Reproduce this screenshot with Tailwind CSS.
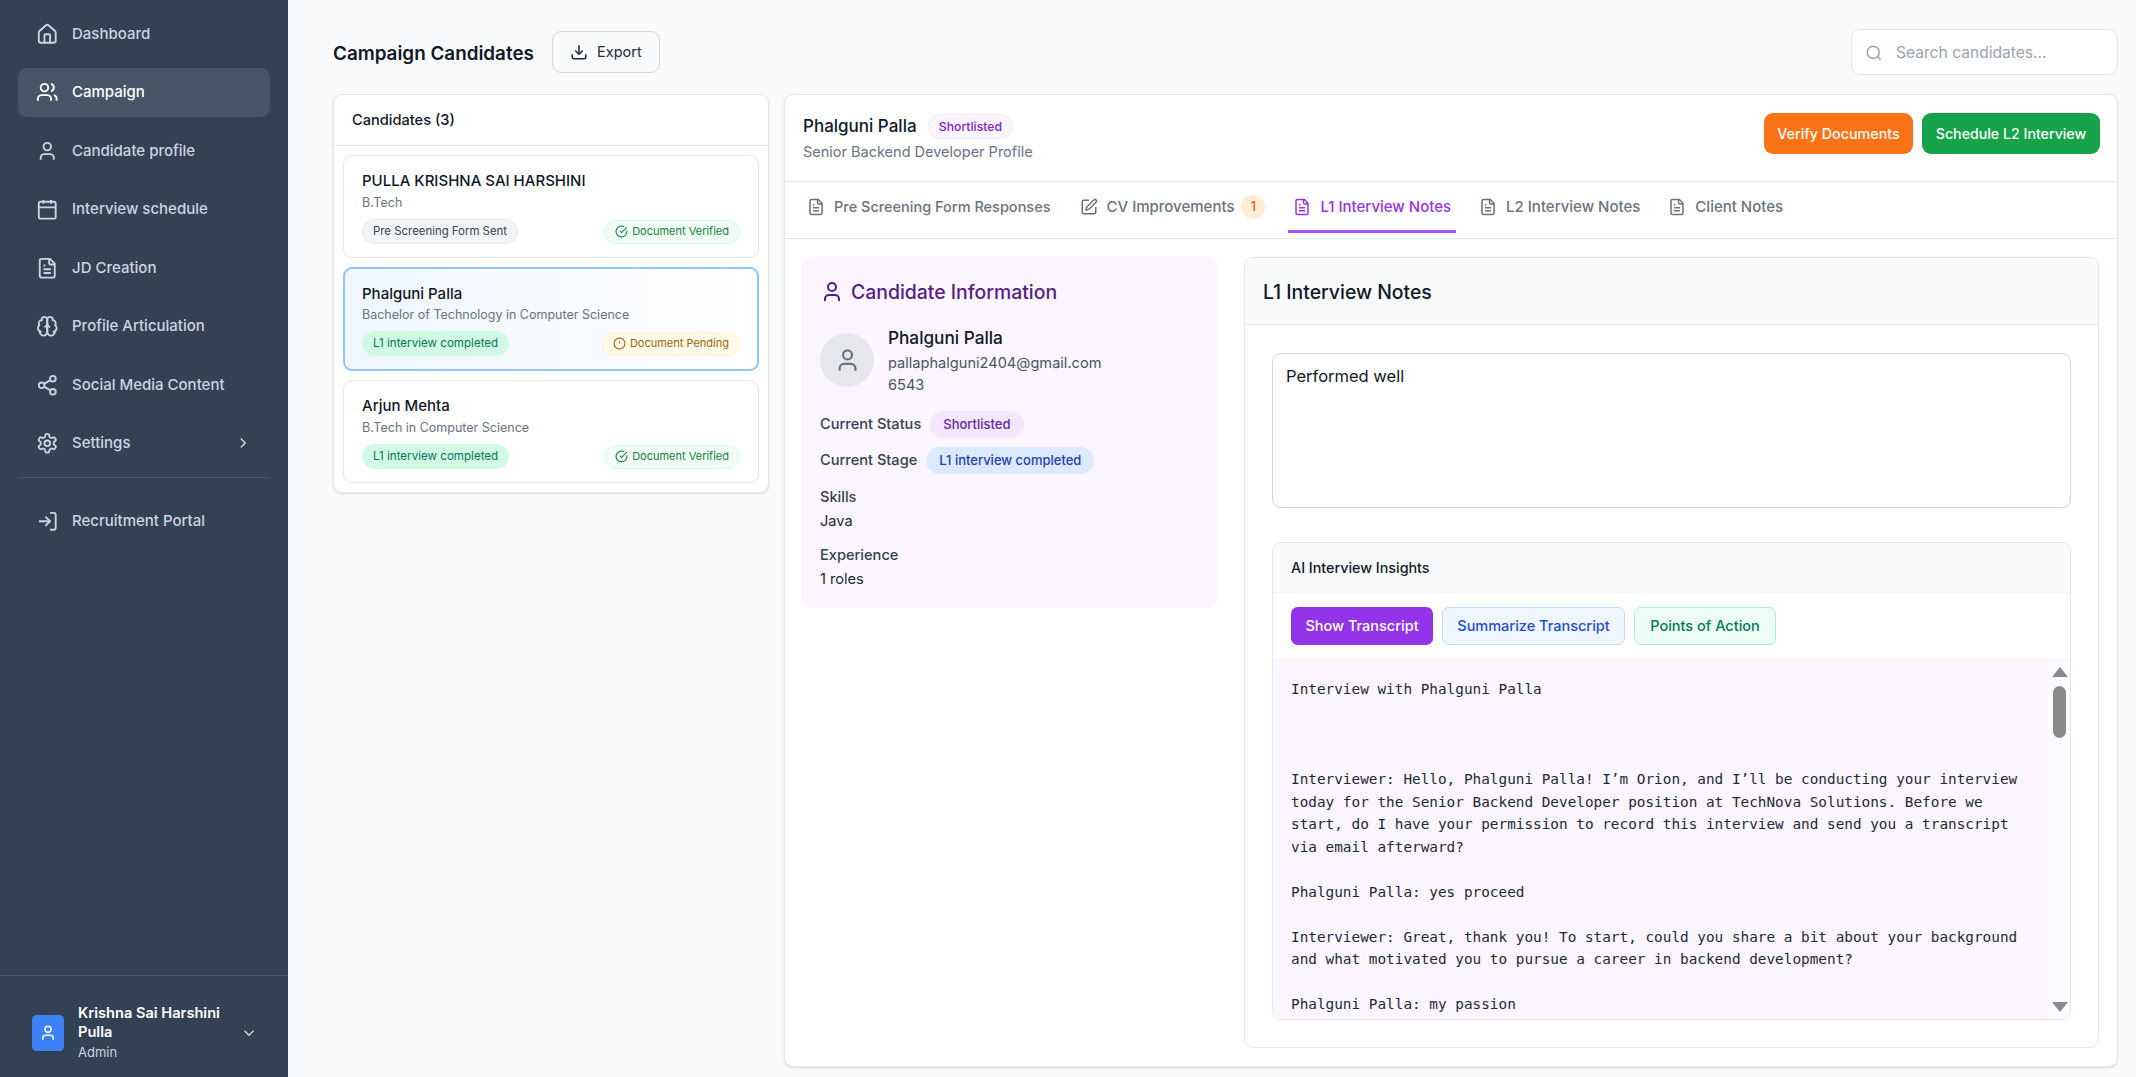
<!doctype html>
<html lang="en" class="text-[18px]">

<head>
    <title>Campaign Candidates</title>
    <meta charset="utf-8">
    <meta name="viewport" content="width=device-width, initial-scale=1">
    <script src="https://cdn.jsdelivr.net/npm/@tailwindcss/browser@4"></script>
</head>

<body class="h-screen overflow-hidden flex bg-[#f9fafb] text-[#111827] font-['Inter',sans-serif]">

<!-- icon sprite -->
<svg class="hidden" xmlns="http://www.w3.org/2000/svg">
    <symbol id="i-house" viewBox="0 0 24 24"><path d="M15 21v-8a1 1 0 0 0-1-1h-4a1 1 0 0 0-1 1v8"/><path d="M3 10a2 2 0 0 1 .709-1.528l7-5.999a2 2 0 0 1 2.582 0l7 5.999A2 2 0 0 1 21 10v9a2 2 0 0 1-2 2H5a2 2 0 0 1-2-2z"/></symbol>
    <symbol id="i-users" viewBox="0 0 24 24"><path d="M16 21v-2a4 4 0 0 0-4-4H6a4 4 0 0 0-4 4v2"/><circle cx="9" cy="7" r="4"/><path d="M22 21v-2a4 4 0 0 0-3-3.87"/><path d="M16 3.13a4 4 0 0 1 0 7.75"/></symbol>
    <symbol id="i-user" viewBox="0 0 24 24"><path d="M19 21v-2a4 4 0 0 0-4-4H9a4 4 0 0 0-4 4v2"/><circle cx="12" cy="7" r="4"/></symbol>
    <symbol id="i-calendar" viewBox="0 0 24 24"><path d="M8 2v4"/><path d="M16 2v4"/><rect width="18" height="18" x="3" y="4" rx="2"/><path d="M3 10h18"/></symbol>
    <symbol id="i-file" viewBox="0 0 24 24"><path d="M15 2H6a2 2 0 0 0-2 2v16a2 2 0 0 0 2 2h12a2 2 0 0 0 2-2V7Z"/><path d="M14 2v4a2 2 0 0 0 2 2h4"/><path d="M10 9H8"/><path d="M16 13H8"/><path d="M16 17H8"/></symbol>
    <symbol id="i-brain" viewBox="0 0 24 24"><path d="M12 5a3 3 0 1 0-5.997.125 4 4 0 0 0-2.526 5.77 4 4 0 0 0 .556 6.588A4 4 0 1 0 12 18Z"/><path d="M12 5a3 3 0 1 1 5.997.125 4 4 0 0 1 2.526 5.77 4 4 0 0 1-.556 6.588A4 4 0 1 1 12 18Z"/><path d="M15 13a4.5 4.5 0 0 1-3-4 4.5 4.5 0 0 1-3 4"/><path d="M17.599 6.5a3 3 0 0 0 .399-1.375"/><path d="M6.003 5.125A3 3 0 0 0 6.401 6.5"/><path d="M3.477 10.896a4 4 0 0 1 .585-.396"/><path d="M19.938 10.5a4 4 0 0 1 .585.396"/><path d="M6 18a4 4 0 0 1-1.967-.516"/><path d="M19.967 17.484A4 4 0 0 1 18 18"/></symbol>
    <symbol id="i-share" viewBox="0 0 24 24"><circle cx="18" cy="5" r="3"/><circle cx="6" cy="12" r="3"/><circle cx="18" cy="19" r="3"/><line x1="8.59" x2="15.42" y1="13.51" y2="17.49"/><line x1="15.41" x2="8.59" y1="6.51" y2="10.49"/></symbol>
    <symbol id="i-settings" viewBox="0 0 24 24"><path d="M12.22 2h-.44a2 2 0 0 0-2 2v.18a2 2 0 0 1-1 1.73l-.43.25a2 2 0 0 1-2 0l-.15-.08a2 2 0 0 0-2.73.73l-.22.38a2 2 0 0 0 .73 2.73l.15.1a2 2 0 0 1 1 1.72v.51a2 2 0 0 1-1 1.74l-.15.09a2 2 0 0 0-.73 2.73l.22.38a2 2 0 0 0 2.73.73l.15-.08a2 2 0 0 1 2 0l.43.25a2 2 0 0 1 1 1.73V20a2 2 0 0 0 2 2h.44a2 2 0 0 0 2-2v-.18a2 2 0 0 1 1-1.73l.43-.25a2 2 0 0 1 2 0l.15.08a2 2 0 0 0 2.73-.73l.22-.39a2 2 0 0 0-.73-2.73l-.15-.08a2 2 0 0 1-1-1.74v-.5a2 2 0 0 1 1-1.74l.15-.09a2 2 0 0 0 .73-2.73l-.22-.38a2 2 0 0 0-2.73-.73l-.15.08a2 2 0 0 1-2 0l-.43-.25a2 2 0 0 1-1-1.73V4a2 2 0 0 0-2-2z"/><circle cx="12" cy="12" r="3"/></symbol>
    <symbol id="i-login" viewBox="0 0 24 24"><path d="M15 3h4a2 2 0 0 1 2 2v14a2 2 0 0 1-2 2h-4"/><polyline points="10 17 15 12 10 7"/><line x1="15" x2="3" y1="12" y2="12"/></symbol>
    <symbol id="i-right" viewBox="0 0 24 24"><path d="m9 18 6-6-6-6"/></symbol>
    <symbol id="i-down" viewBox="0 0 24 24"><path d="m6 9 6 6 6-6"/></symbol>
    <symbol id="i-download" viewBox="0 0 24 24"><path d="M21 15v4a2 2 0 0 1-2 2H5a2 2 0 0 1-2-2v-4"/><polyline points="7 10 12 15 17 10"/><line x1="12" x2="12" y1="15" y2="3"/></symbol>
    <symbol id="i-search" viewBox="0 0 24 24"><circle cx="11" cy="11" r="8"/><path d="m21 21-4.3-4.3"/></symbol>
    <symbol id="i-check" viewBox="0 0 24 24"><path d="M21.801 10A10 10 0 1 1 17 3.335"/><path d="m9 11 3 3L22 4"/></symbol>
    <symbol id="i-alert" viewBox="0 0 24 24"><circle cx="12" cy="12" r="10"/><line x1="12" x2="12" y1="8" y2="12"/><line x1="12" x2="12.01" y1="16" y2="16"/></symbol>
    <symbol id="i-pen" viewBox="0 0 24 24"><path d="M12 3H5a2 2 0 0 0-2 2v14a2 2 0 0 0 2 2h14a2 2 0 0 0 2-2v-7"/><path d="M18.375 2.625a1 1 0 0 1 3 3l-9.013 9.014a2 2 0 0 1-.853.505l-2.873.84a.5.5 0 0 1-.62-.62l.84-2.873a2 2 0 0 1 .506-.852z"/></symbol>
</svg>

<!-- sidebar -->
<aside class="w-64 shrink-0 h-full bg-[#334155] flex flex-col justify-between">
    <nav class="px-4 pt-2 text-[15px] font-medium text-[#cbd5e1]">
        <div class="space-y-2">
            <a class="flex items-center gap-3 px-4 py-3 rounded-lg"><svg class="w-5 h-5 fill-none stroke-current stroke-2"><use href="#i-house"/></svg>Dashboard</a>
            <a class="flex items-center gap-3 px-4 py-3 rounded-lg bg-[#475569] text-white"><svg class="w-5 h-5 fill-none stroke-current stroke-2"><use href="#i-users"/></svg>Campaign</a>
            <a class="flex items-center gap-3 px-4 py-3 rounded-lg"><svg class="w-5 h-5 fill-none stroke-current stroke-2"><use href="#i-user"/></svg>Candidate profile</a>
            <a class="flex items-center gap-3 px-4 py-3 rounded-lg"><svg class="w-5 h-5 fill-none stroke-current stroke-2"><use href="#i-calendar"/></svg>Interview schedule</a>
            <a class="flex items-center gap-3 px-4 py-3 rounded-lg"><svg class="w-5 h-5 fill-none stroke-current stroke-2"><use href="#i-file"/></svg>JD Creation</a>
            <a class="flex items-center gap-3 px-4 py-3 rounded-lg"><svg class="w-5 h-5 fill-none stroke-current stroke-2"><use href="#i-brain"/></svg>Profile Articulation</a>
            <a class="flex items-center gap-3 px-4 py-3 rounded-lg"><svg class="w-5 h-5 fill-none stroke-current stroke-2"><use href="#i-share"/></svg>Social Media Content</a>
            <a class="flex items-center gap-3 px-4 py-3 rounded-lg"><svg class="w-5 h-5 fill-none stroke-current stroke-2"><use href="#i-settings"/></svg><span class="flex-1">Settings</span><svg class="w-4 h-4 fill-none stroke-current stroke-2"><use href="#i-right"/></svg></a>
        </div>
        <div class="mt-2 pt-4 border-t border-[#475569]">
            <a class="flex items-center gap-3 px-4 py-3 rounded-lg"><svg class="w-5 h-5 fill-none stroke-current stroke-2"><use href="#i-login"/></svg>Recruitment Portal</a>
        </div>
    </nav>

    <div class="border-t border-[#475569] pl-[32px] pr-[30px] pt-[28px] pb-[15px] flex items-center">
        <div class="w-[32px] h-[36px] shrink-0 rounded bg-[#3b82f6] flex items-center justify-center text-white">
            <svg class="w-[18px] h-[18px] fill-none stroke-current stroke-2"><use href="#i-user"/></svg>
        </div>
        <div class="ml-[14px] flex-1 min-w-0">
            <p class="text-[14.6px] leading-[19px] font-semibold text-white">Krishna Sai Harshini Pulla</p>
            <p class="text-[13px] leading-[20px] text-[#cbd5e1]">Admin</p>
        </div>
        <svg class="w-4 h-4 ml-2 shrink-0 fill-none stroke-[#cbd5e1] stroke-2"><use href="#i-down"/></svg>
    </div>
</aside>

<!-- main -->
<main class="flex-1 min-w-0 h-full flex flex-col pl-10 pr-4 pt-[29px] pb-[10px]">
    <div class="flex items-center justify-between h-[46px] mb-[19px]">
        <div class="flex items-center gap-[18px]">
            <h1 class="mt-[5px] text-[18.85px] font-semibold">Campaign Candidates</h1>
            <button class="h-[42px] w-[108px] flex items-center justify-center gap-[9px] rounded-lg border border-gray-300 bg-[#f9fafb] text-[14.5px] text-[#1f2937]">
                <svg class="w-[18px] h-[18px] fill-none stroke-current stroke-2"><use href="#i-download"/></svg>Export
            </button>
        </div>
        <div class="w-[267px] h-[46px] pt-[1px] flex items-center gap-[13px] pl-[13px] rounded-lg border border-gray-200 bg-white text-[15.6px] text-[#9ca3af]">
            <svg class="w-[18px] h-[18px] fill-none stroke-current stroke-2"><use href="#i-search"/></svg>Search candidates...
        </div>
    </div>

    <div class="flex-1 min-h-0 flex gap-[15px] items-start">
        <!-- candidate list -->
        <section class="w-[436px] shrink-0 rounded-lg border border-gray-200 bg-white shadow-sm">
            <h2 class="h-[51px] pt-[1px] flex items-center px-4 border-b border-gray-200 text-[14.6px] font-medium">Candidates (3)</h2>
            <div class="p-[9px] flex flex-col gap-[9px]">
                <div class="h-[103px] rounded-lg border border-gray-200 bg-white px-4 pt-[14px]">
                    <p class="text-[15px] font-medium leading-[22px]">PULLA KRISHNA SAI HARSHINI</p>
                    <p class="text-[12.5px] leading-[20px] mt-[1px] text-[#6b7280]">B.Tech</p>
                    <div class="mt-[6px] flex items-center justify-between">
                        <span class="h-[25px] px-[10px] flex items-center rounded-full border border-gray-200 bg-gray-100 text-[11.4px] text-[#374151]">Pre Screening Form Sent</span>
                        <span class="h-[24px] px-[10px] flex items-center gap-[4px] rounded-full border border-[#dcfce7] bg-[#f0fdf4] text-[11px] text-[#15803d]"><svg class="w-[13px] h-[13px] fill-none stroke-current stroke-2"><use href="#i-check"/></svg>Document Verified</span>
                    </div>
                </div>
                <div class="h-[104px] rounded-lg border-2 border-[#93c5fd] bg-linear-to-r from-[#eff6ff] to-white px-[17px] pt-[14px]">
                    <p class="text-[15px] font-medium leading-[22px]">Phalguni Palla</p>
                    <p class="text-[12.5px] leading-[20px] text-[#6b7280]">Bachelor of Technology in Computer Science</p>
                    <div class="mt-[6px] flex items-center justify-between">
                        <span class="h-[25px] px-[10px] flex items-center rounded-full border border-[#d1fae5] bg-[#d1fae5] text-[11.6px] text-[#047857]">L1 interview completed</span>
                        <span class="h-[24px] px-[10px] flex items-center gap-[4px] rounded-full border border-[#fef9c3] bg-[#fefce8] text-[11px] text-[#a16207]"><svg class="w-[13px] h-[13px] fill-none stroke-current stroke-2"><use href="#i-alert"/></svg>Document Pending</span>
                    </div>
                </div>
                <div class="h-[103px] rounded-lg border border-gray-200 bg-white px-4 pt-[14px]">
                    <p class="text-[15px] font-medium leading-[22px]">Arjun Mehta</p>
                    <p class="text-[12.5px] leading-[20px] mt-[1px] text-[#6b7280]">B.Tech in Computer Science</p>
                    <div class="mt-[6px] flex items-center justify-between">
                        <span class="h-[25px] px-[10px] flex items-center rounded-full border border-[#d1fae5] bg-[#d1fae5] text-[11.6px] text-[#047857]">L1 interview completed</span>
                        <span class="h-[24px] px-[10px] flex items-center gap-[4px] rounded-full border border-[#dcfce7] bg-[#f0fdf4] text-[11px] text-[#15803d]"><svg class="w-[13px] h-[13px] fill-none stroke-current stroke-2"><use href="#i-check"/></svg>Document Verified</span>
                    </div>
                </div>
            </div>
        </section>

        <!-- candidate detail -->
        <section class="flex-1 min-w-0 h-full flex flex-col rounded-lg border border-gray-200 bg-white shadow-sm">
            <header class="h-[87px] shrink-0 flex items-start justify-between pl-4 pr-[17px] pt-[18px] border-b border-gray-200">
                <div class="mt-[1px]">
                    <div class="flex items-center gap-2.5">
                        <h2 class="text-[17px] font-medium">Phalguni Palla</h2>
                        <span class="h-[25px] px-[10px] flex items-center rounded-full border border-[#f3e8ff] bg-[#faf5ff] text-[12.2px] font-medium text-[#7e22ce]">Shortlisted</span>
                    </div>
                    <p class="text-[14.5px] mt-[1px] text-[#6b7280]">Senior Backend Developer Profile</p>
                </div>
                <div class="flex gap-[9px]">
                    <button class="h-[41px] w-[149px] rounded-lg bg-[#f97316] text-[14.3px] font-medium text-white">Verify Documents</button>
                    <button class="h-[41px] w-[178px] rounded-lg bg-[#16a34a] text-[14.2px] font-medium text-white">Schedule L2 Interview</button>
                </div>
            </header>

            <nav class="h-[57px] shrink-0 flex px-[17px] gap-[5px] border-b border-gray-200 text-[15px] font-medium text-[#6b7280]">
                <a class="flex items-center gap-[9px] px-[5px] h-[50px] text-[14.5px]"><svg class="w-[18px] h-[18px] fill-none stroke-current stroke-2"><use href="#i-file"/></svg>Pre Screening Form Responses</a>
                <a class="flex items-center gap-[9px] px-[5px] ml-[14px] h-[50px]"><svg class="w-[18px] h-[18px] fill-none stroke-current stroke-2"><use href="#i-pen"/></svg>CV Improvements<span class="-ml-[2px] w-[24px] h-[24px] flex items-center justify-center rounded-full bg-[#ffedd5] text-[12.5px] text-[#ea580c]">1</span></a>
                <a class="flex items-center gap-[9px] px-[5px] pt-[2px] ml-[13px] h-[51px] border-b-[3px] border-[#a855f7] text-[#9333ea]"><svg class="w-[18px] h-[18px] fill-none stroke-current stroke-2"><use href="#i-file"/></svg>L1 Interview Notes</a>
                <a class="flex items-center gap-[9px] px-[5px] ml-[13px] h-[50px]"><svg class="w-[18px] h-[18px] fill-none stroke-current stroke-2"><use href="#i-file"/></svg>L2 Interview Notes</a>
                <a class="flex items-center gap-[9px] px-[5px] ml-[13px] h-[50px]"><svg class="w-[18px] h-[18px] fill-none stroke-current stroke-2"><use href="#i-file"/></svg>Client Notes</a>
            </nav>

            <div class="flex-1 min-h-0 flex items-start gap-[27px] pl-[17px] pr-[18px] py-[18px]">
                <!-- candidate information -->
                <div class="w-[415px] shrink-0 rounded-lg bg-[#faf5ff] p-[18px] h-[351px]">
                    <h3 class="flex items-center gap-[7px] text-[19.4px] font-medium text-[#581c87] leading-[34px]"><svg class="w-[24px] h-[24px] fill-none stroke-current stroke-2"><use href="#i-user"/></svg>Candidate Information</h3>
                    <div class="flex gap-[14px] mt-[17px]">
                        <div class="w-[54px] h-[54px] mt-[7px] rounded-full bg-[#e5e7eb] flex items-center justify-center text-[#6b7280]"><svg class="w-[27px] h-[27px] fill-none stroke-current stroke-2"><use href="#i-user"/></svg></div>
                        <div>
                            <p class="text-[17.2px] font-medium leading-[24px]">Phalguni Palla</p>
                            <p class="text-[14.6px] leading-[22px] mt-[2px] text-[#4b5563]">pallaphalguni2404@gmail.com</p>
                            <p class="text-[14.6px] leading-[22px] text-[#4b5563]">6543</p>
                        </div>
                    </div>
                    <div class="mt-[15px] flex items-center gap-[9px] text-[14.6px] text-[#374151] font-medium h-[27px]">Current Status<span class="h-[27px] px-[13px] flex items-center rounded-full bg-[#f3e8ff] text-[13px] font-medium text-[#6b21a8]">Shortlisted</span></div>
                    <div class="mt-[9px] flex items-center gap-[9px] text-[14.6px] text-[#374151] font-medium h-[27px]">Current Stage<span class="h-[27px] px-[13px] flex items-center rounded-full bg-[#dbeafe] text-[13px] font-medium text-[#1e40af]">L1 interview completed</span></div>
                    <p class="mt-[11px] text-[14.6px] font-medium leading-[24px] text-[#374151]">Skills</p>
                    <p class="text-[14.6px] leading-[24px] text-[#1f2937]">Java</p>
                    <p class="mt-[10px] text-[14.6px] font-medium leading-[24px] text-[#374151]">Experience</p>
                    <p class="text-[14.6px] leading-[24px] text-[#1f2937]">1 roles</p>
                </div>

                <!-- notes -->
                <div class="flex-1 min-w-0 h-full flex flex-col rounded-lg border border-gray-200">
                    <div class="h-[67px] pt-[3px] shrink-0 flex items-center px-[18px] rounded-t-lg bg-[#f9fafb] border-b border-gray-200 text-[19.4px] font-medium">L1 Interview Notes</div>
                    <div class="flex-1 min-h-0 flex flex-col px-[27px] pt-[28px] pb-[27px]">
                        <textarea class="h-[155px] shrink-0 resize-none rounded-lg border border-gray-300 px-[13px] py-[9px] text-[16.5px] text-[#111827] leading-[27px] outline-none">Performed well</textarea>
                        <div class="mt-[34px] flex-1 min-h-0 flex flex-col rounded-lg border border-gray-200 overflow-hidden">
                            <div class="h-[50px] shrink-0 flex items-center px-[18px] bg-[#f9fafb] border-b border-gray-100 text-[14.3px] font-medium">AI Interview Insights</div>
                            <div class="h-[67px] shrink-0 flex items-center gap-[9px] px-[18px] border-b border-gray-100 text-[14.5px] font-medium">
                                <button class="h-[38px] w-[142px] rounded-md bg-[#9333ea] text-white">Show Transcript</button>
                                <button class="h-[38px] w-[183px] rounded-md border border-[#bfdbfe] bg-[#eff6ff] text-[#1d4ed8]">Summarize Transcript</button>
                                <button class="h-[38px] w-[142px] rounded-md border border-[#a7f3d0] bg-[#ecfdf5] text-[#047857]">Points of Action</button>
                            </div>
                            <div class="flex-1 min-h-0 flex overflow-hidden">
                                <pre class="flex-1 min-w-0 overflow-hidden bg-[#faf5ff] px-[18px] pt-[18px] whitespace-pre-wrap font-['DejaVu_Sans_Mono',monospace] text-[14.37px] leading-[22.5px] text-[#1f2937]">Interview with Phalguni Palla



Interviewer: Hello, Phalguni Palla! I’m Orion, and I’ll be conducting your interview today for the Senior Backend Developer position at TechNova Solutions. Before we start, do I have your permission to record this interview and send you a transcript via email afterward?

Phalguni Palla: yes proceed

Interviewer: Great, thank you! To start, could you share a bit about your background and what motivated you to pursue a career in backend development?

Phalguni Palla: my passion</pre>
                                <!-- scrollbar -->
                                <div class="w-[23px] shrink-0 bg-[#fcf9ff] flex flex-col items-center justify-between py-[7px] pl-[2px]">
                                    <div class="flex flex-col items-center gap-[9px]">
                                        <div class="w-0 h-0 border-x-[8px] border-x-transparent border-b-[10px] border-b-[#8a8a8a]"></div>
                                        <div class="w-[13px] h-[52px] rounded-full bg-[#8a8a8a]"></div>
                                    </div>
                                    <div class="w-0 h-0 border-x-[8px] border-x-transparent border-t-[10px] border-t-[#8a8a8a]"></div>
                                </div>
                            </div>
                        </div>
                    </div>
                </div>
            </div>
        </section>
    </div>
</main>
</body>

</html>
